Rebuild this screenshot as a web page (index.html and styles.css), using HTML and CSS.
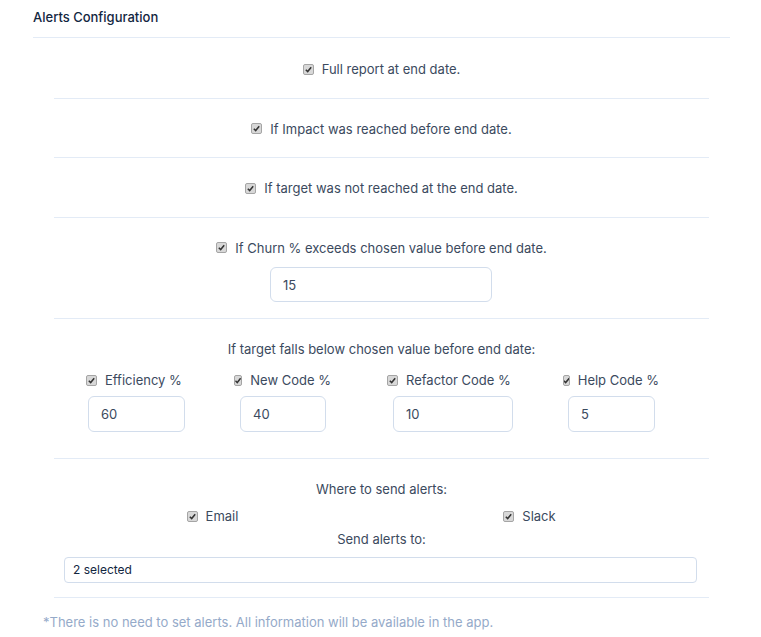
FILE: index.html
```html
<!DOCTYPE HTML>
<html>
<head>
<meta http-equiv="Content-Type" content="text/html; charset=utf-8">
<title>Alerts Configuration</title>
<link rel="stylesheet" href="styles.css">
</head>

<body>
	<div class="card">
		<div class="card-header">Alerts Configuration</div>
		<div class="card-body">
			<div class="row">
				<label class="chk"><span class="box"></span>Full report at end date.</label>
			</div>
			<div class="row">
				<label class="chk"><span class="box"></span>If Impact was reached before end date.</label>
			</div>
			<div class="row">
				<label class="chk"><span class="box"></span>If target was not reached at the end date.</label>
			</div>
			<div class="row row-churn">
				<label class="chk"><span class="box"></span>If Churn % exceeds chosen value before end date.</label>
				<input class="field field-churn" type="text" value="15">
			</div>
			<div class="row row-target">
				<p class="text">If target falls below chosen value before end date:</p>
				<div class="cols">
					<div class="col col-eff">
						<label class="chk"><span class="box"></span>Efficiency %</label>
						<input class="field" type="text" value="60">
					</div>
					<div class="col col-new">
						<label class="chk"><span class="box"></span>New Code %</label>
						<input class="field" type="text" value="40">
					</div>
					<div class="col col-ref">
						<label class="chk"><span class="box"></span>Refactor Code %</label>
						<input class="field" type="text" value="10">
					</div>
					<div class="col col-help">
						<label class="chk"><span class="box"></span>Help Code %</label>
						<input class="field" type="text" value="5">
					</div>
				</div>
			</div>
			<div class="row row-send">
				<p class="text">Where to send alerts:</p>
				<div class="channels">
					<label class="chk"><span class="box"></span>Email</label>
					<label class="chk"><span class="box"></span>Slack</label>
				</div>
				<p class="text text-to">Send alerts to:</p>
				<div class="select">2 selected</div>
			</div>
		</div>
		<p class="note">*There is no need to set alerts. All information will be available in the app.</p>
	</div>
</body>
</html>
```

FILE: styles.css
```css
body { margin: 0; background: #fff; font-family: "Inter", "Lato", sans-serif; color: #12263f; }
p { margin: 0; }

.card { width: 761px; }
.card-header { margin: 0 31px 0 33px; height: 37px; line-height: 34px; font-size: 13px; font-weight: 500; color: #12263f; border-bottom: 1px solid #e3ebf6; }
.card-body { padding: 0 52px 0 54px; }

.row { border-bottom: 1px solid #e3ebf6; padding: 21px 0 18px; text-align: center; font-size: 13px; line-height: 20px; color: #3b4a5e; }
.row + .row { padding-top: 20px; }

.chk { display: inline-flex; align-items: center; white-space: nowrap; }
.box { display: inline-block; width: 9px; height: 9px; margin-right: 8px; border: 1px solid #a5a5a5; border-radius: 2px; background: #d8d8d8 url("data:image/svg+xml,%3Csvg xmlns='http://www.w3.org/2000/svg' viewBox='0 0 10 10'%3E%3Cpath d='M2 5.2 4.1 7.3 8 2.6' fill='none' stroke='%23333' stroke-width='1.7'/%3E%3C/svg%3E") center/9px 9px no-repeat; }

.field { display: block; box-sizing: border-box; height: 36px; padding: 0 12px; border: 1px solid #d2ddec; border-radius: 6px; font: 13px "Inter", "Lato", sans-serif; color: #3b4a5e; background: #fff; outline: none; }

.row-churn { padding-bottom: 16px; }
.field-churn { width: 222px; height: 35px; margin: 9px auto 0 216px; }

.row-target { padding-bottom: 26px; }
.cols { display: flex; margin-top: 11px; padding-left: 32px; text-align: left; }
.col { display: flex; flex-direction: column; }
.col .field { margin-top: 6px; }
.col-eff { width: 99px; }
.col-eff .field { width: 97px; margin-left: 2px; }
.col-new { width: 97px; margin-left: 49px; }
.col-new .field { width: 86px; margin-left: 6px; }
.col-ref { width: 126px; margin-left: 56px; }
.col-ref .field { width: 120px; margin-left: 6px; }
.col-help { width: 96px; margin-left: 50px; }
.col-help .field { width: 87px; margin-left: 5px; }

.row-send { padding-bottom: 14px; }
.channels { display: grid; grid-template-columns: 317px 317px; justify-items: center; margin: 7px 0 0; }
.text-to { margin-top: 3px; }
.select { box-sizing: border-box; height: 26px; margin: 8px 12px 0 10px; padding: 0 8px; border: 1px solid #d2ddec; border-radius: 4px; text-align: left; font-size: 12px; line-height: 24px; color: #12263f; }

.note { margin: 15px 0 0 43px; font-size: 13px; line-height: 18px; color: #95aac9; }
```
